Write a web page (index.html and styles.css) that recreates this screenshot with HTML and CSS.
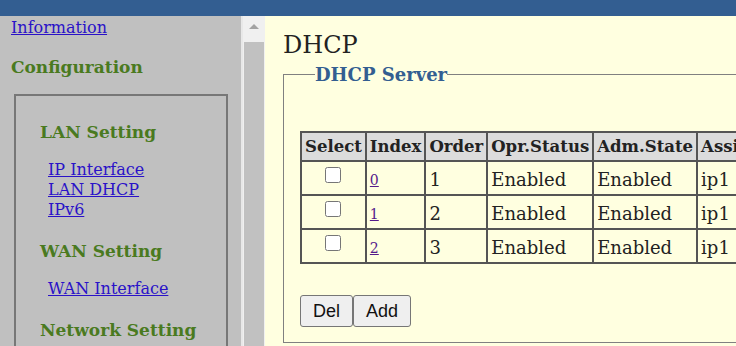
FILE: index.html
```html
<!DOCTYPE html>
<html lang="en">
<head>
    <meta charset="UTF-8">
    <title>DHCP</title>
    <link rel="stylesheet" href="styles.css">
</head>
<body>
    <div class="topbar"></div>

    <div class="frames">
        <aside class="menu">
            <a href="#" class="top-link">Information</a>
            <h3 class="group">Configuration</h3>
            <div class="menu-box">
                <h4>LAN Setting</h4>
                <div class="links">
                    <a href="#">IP Interface</a>
                    <a href="#">LAN DHCP</a>
                    <a href="#">IPv6</a>
                </div>
                <h4>WAN Setting</h4>
                <div class="links">
                    <a href="#">WAN Interface</a>
                </div>
                <h4>Network Setting</h4>
            </div>
        </aside>

        <div class="scrollbar">
            <div class="arrow"></div>
            <div class="thumb"></div>
        </div>

        <main class="content">
            <h1>DHCP</h1>
            <fieldset>
                <legend>DHCP Server</legend>
                <table class="grid">
                    <tr>
                        <th>Select</th>
                        <th>Index</th>
                        <th>Order</th>
                        <th>Opr.Status</th>
                        <th>Adm.State</th>
                        <th>Assigned</th>
                    </tr>
                    <tr>
                        <td class="sel"><input type="checkbox"></td>
                        <td><a href="#" class="idx">0</a></td>
                        <td>1</td>
                        <td>Enabled</td>
                        <td>Enabled</td>
                        <td>ip1</td>
                    </tr>
                    <tr>
                        <td class="sel"><input type="checkbox"></td>
                        <td><a href="#" class="idx">1</a></td>
                        <td>2</td>
                        <td>Enabled</td>
                        <td>Enabled</td>
                        <td>ip1</td>
                    </tr>
                    <tr>
                        <td class="sel"><input type="checkbox"></td>
                        <td><a href="#" class="idx">2</a></td>
                        <td>3</td>
                        <td>Enabled</td>
                        <td>Enabled</td>
                        <td>ip1</td>
                    </tr>
                </table>

                <div class="buttons">
                    <button>Del</button><button>Add</button>
                </div>
            </fieldset>
        </main>
    </div>
</body>
</html>
```

FILE: styles.css
```css
/* base */
body {
    margin: 0;
    padding: 0;
    height: 346px;
    overflow: hidden;
    font-family: "DejaVu Serif", serif;
    color: #222;
}
.topbar {
    height: 16px;
    background-color: #335e91;
}
.frames {
    display: flex;
    height: 330px;
}

/* left menu */
.menu {
    width: 243px;
    background-color: #c0c0c0;
    padding: 0 0 0 11px;
    box-sizing: border-box;
    border-right: 2px solid #e8e8e8;
    overflow: hidden;
}
.menu a {
    color: #2a12c8;
    font-size: 16px;
}
.menu .top-link {
    display: block;
    margin-top: 2px;
}
.menu h3 {
    color: #4a7a20;
    font-size: 17px;
    margin: 20px 0 17px 0;
}
.menu-box {
    width: 214px;
    height: 260px;
    margin-left: 3px;
    border: 2px solid #777;
    box-sizing: border-box;
    padding: 26px 0 0 24px;
}
.menu-box h4 {
    color: #4a7a20;
    font-size: 17px;
    margin: 0 0 18px 0;
}
.menu-box .links {
    display: flex;
    flex-direction: column;
    padding-left: 8px;
    margin-bottom: 21px;
    line-height: 20px;
}

/* fake frame scrollbar */
.scrollbar {
    width: 22px;
    background-color: #f0f0f0;
    display: flex;
    flex-direction: column;
}
.scrollbar .arrow {
    height: 26px;
    position: relative;
}
.scrollbar .arrow::after {
    content: "";
    position: absolute;
    left: 6px;
    top: 8px;
    border-left: 5px solid transparent;
    border-right: 5px solid transparent;
    border-bottom: 5px solid #a3a3a3;
}
.scrollbar .thumb {
    flex: 1;
    margin: 0 1px 0 1px;
    background-color: #c1c1c1;
}

/* content */
.content {
    flex: 1;
    background-color: #ffffe0;
    padding: 0 0 0 18px;
    overflow: hidden;
}
.content h1 {
    font-weight: normal;
    font-size: 24px;
    margin: 15px 0 5px 0;
}
fieldset {
    width: 600px;
    margin: 0;
    padding: 0 0 15px 16px;
    border: 1px solid #808080;
    border-right: none;
}
legend {
    color: #335e91;
    font-weight: bold;
    font-size: 18px;
    margin-left: 15px;
    padding: 0;
}
.grid {
    border-collapse: collapse;
    margin-top: 46px;
    white-space: nowrap;
}
.grid th,
.grid td {
    border: 2px solid #555;
    padding: 0 3px;
    text-align: left;
    line-height: 21px;
}
.grid th {
    background-color: #dcdcdc;
    font-size: 16.5px;
    height: 27px;
}
.grid td {
    font-size: 18px;
    height: 29px;
    padding-top: 2px;
}
.grid td.sel {
    text-align: center;
    vertical-align: top;
    padding-top: 3px;
}
.grid input {
    width: 16px;
    height: 16px;
    margin: 2px 0 0 0;
}
.grid .idx {
    color: #551a8b;
    font-size: 14px;
}
.buttons {
    margin-top: 31px;
    display: flex;
}
.buttons button {
    font-family: "Liberation Sans", Arial, sans-serif;
    font-size: 18px;
    height: 32px;
    padding: 0 12px;
    margin: 0;
    background-color: #efefef;
    border: 1px solid #767676;
    border-radius: 3px;
    color: #111;
}
```
